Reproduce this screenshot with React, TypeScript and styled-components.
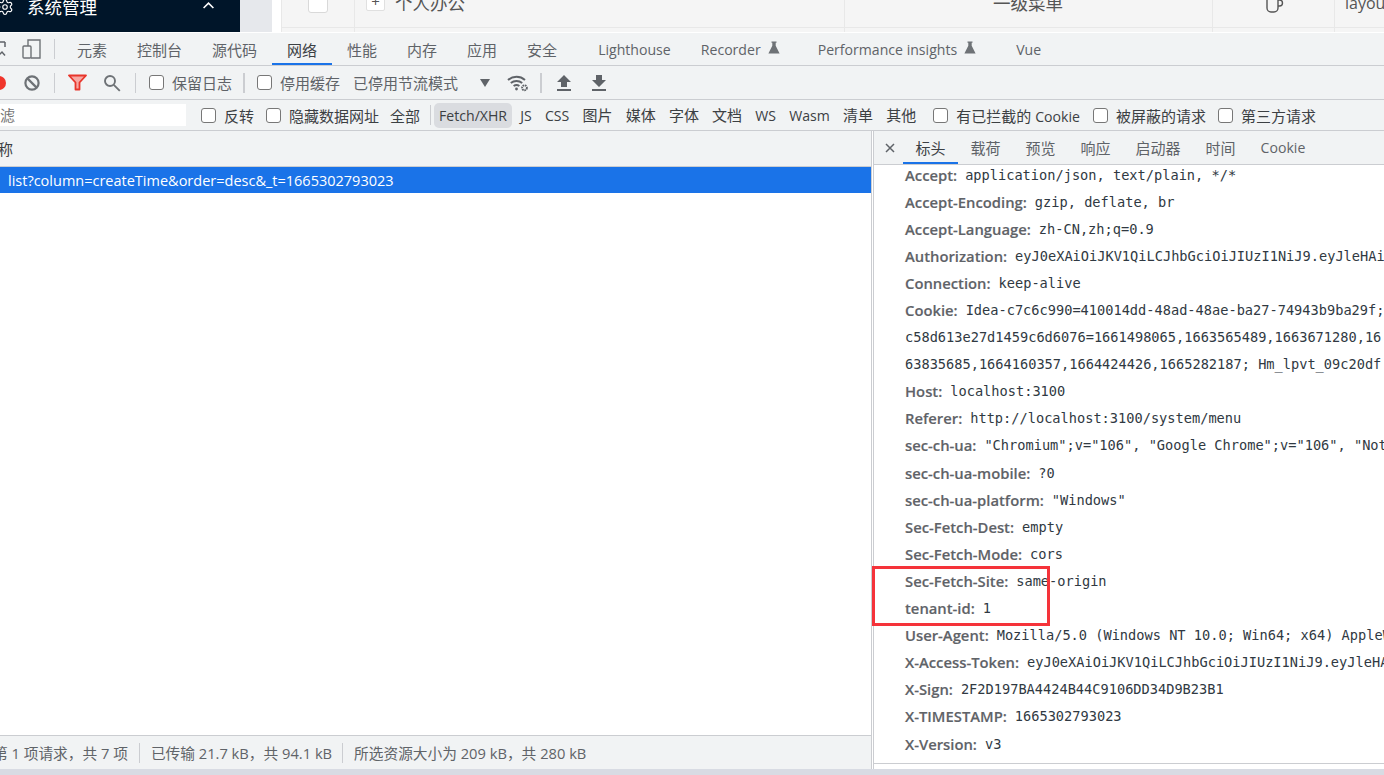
import * as React from "react";
import styled, { createGlobalStyle } from "styled-components";
import { Settings } from "lucide-react";

const UI_FONT = `"Open Sans", "Noto Sans CJK SC", sans-serif`;
const MONO_FONT = `"DejaVu Sans Mono", "Noto Sans CJK SC", monospace`;

const Global = createGlobalStyle`
  html, body {
    margin: 0;
    width: 1384px;
    height: 775px;
    overflow: hidden;
    background: #fff;
    font-family: ${UI_FONT};
  }
  #root { height: 775px; overflow: hidden; }
`;

const Page = styled.div`
  position: relative;
  display: flex;
  flex-direction: column;
  width: 1384px;
  height: 775px;
  overflow: hidden;
`;

/* app behind the devtools, only its last rows show */
const AppStrip = styled.div`
  display: flex;
  flex: 0 0 33px;
  height: 33px;
  overflow: hidden;
  background: #fff;
`;

const Sidebar = styled.div`
  display: flex;
  align-items: center;
  flex: 0 0 240px;
  height: 32px;
  box-sizing: border-box;
  padding-bottom: 18px;
  background: #001529;
  color: #fff;
  font-size: 17.5px;
  overflow: hidden;
`;

const SidebarGear = styled(Settings)`
  flex: 0 0 18px;
  margin-left: -4px;
`;

const SidebarLabel = styled.span`
  margin-left: 13px;
  line-height: 24px;
`;

const SidebarChevron = styled.svg`
  margin: -3px 0 0 106px;
`;

const Gutter = styled.div`
  flex: 0 0 32px;
  height: 32px;
  background: #e6e8ec;
`;

const TableWrap = styled.div`
  flex: 1;
  height: 32px;
  padding-left: 9px;
  overflow: hidden;
`;

const TableRow = styled.div`
  display: grid;
  grid-template-columns: 72px 490px 368px 122px 1fr;
  height: 32px;
  overflow: hidden;
  background: linear-gradient(#f5f5f5 27px, #e8e8e8 27px, #e8e8e8 28px, #f5f5f5 28px);
  border-left: 1px solid #e8e8e8;
  color: #555;
  font-size: 17.5px;
`;

const TableCell = styled.div<{ $center?: boolean }>`
  display: flex;
  align-items: flex-start;
  justify-content: ${(p) => (p.$center ? "center" : "flex-start")};
  height: 32px;
  box-shadow: 1px 0 0 #e8e8e8;
  white-space: nowrap;
`;

const RowCheck = styled.span`
  width: 20px;
  height: 20px;
  margin-top: -7px;
  box-sizing: border-box;
  background: #fff;
  border: 1px solid #d9d9d9;
  border-radius: 3px;
`;

const ExpandBox = styled.span`
  display: flex;
  align-items: center;
  justify-content: center;
  flex: 0 0 19px;
  height: 19px;
  margin: -8px 10px 0 12px;
  box-sizing: border-box;
  background: #fff;
  border: 1px solid #e0e0e0;
  border-radius: 2px;
  font-size: 15px;
  line-height: 1;
`;

const CellText = styled.span`
  margin-top: -9px;
  line-height: 24px;
`;

const LayoutText = styled(CellText)`
  margin-left: 11px;
  font-size: 16px;
`;

/* devtools */
const Tools = styled.div`
  display: flex;
  flex-direction: column;
  flex: 1;
  min-height: 0;
  background: #f1f3f4;
  color: #5f6368;
  font-size: 15px;
`;

const Latin = styled.span`
  font-size: 14.1px;
`;

const TabsBar = styled.div`
  display: flex;
  align-items: stretch;
  flex: 0 0 33px;
  box-sizing: border-box;
  border-bottom: 1px solid #cbcdd1;
`;

const DeviceGroup = styled.div`
  display: flex;
  align-items: center;
  flex: 0 0 62px;
  overflow: hidden;
`;

const DeviceSep = styled.span`
  flex: 0 0 1px;
  height: 20px;
  margin-left: 13px;
  background: #cbcdd1;
`;

const Sep = styled.span<{ $h?: number; $gap?: number; $w?: number; $right?: number }>`
  flex: 0 0 ${(p) => p.$w ?? 1}px;
  height: ${(p) => p.$h ?? 20}px;
  margin: 0 ${(p) => p.$right ?? p.$gap ?? 0}px 0 ${(p) => p.$gap ?? 0}px;
  background: #cbcdd1;
`;

const Tab = styled.div<{ $on?: boolean; $ml?: number }>`
  display: flex;
  align-items: center;
  padding: 0 15px;
  margin-left: ${(p) => p.$ml ?? 0}px;
  color: ${(p) => (p.$on ? "#3c4043" : "#5f6368")};
  white-space: nowrap;
  box-shadow: ${(p) => (p.$on ? "inset 0 -2px 0 #1a73e8" : "none")};
`;

const Flask = styled.svg`
  margin-left: 7px;
  margin-top: -3px;
`;

const ToolBar = styled.div`
  display: flex;
  align-items: center;
  flex: 0 0 34px;
  box-sizing: border-box;
  border-bottom: 1px solid #cbcdd1;
`;

const IconSlot = styled.span<{ $ml?: number }>`
  display: flex;
  margin-left: ${(p) => p.$ml ?? 0}px;
`;

const Check = styled.span<{ $ml?: number }>`
  flex: 0 0 15px;
  width: 15px;
  height: 15px;
  margin-left: ${(p) => p.$ml ?? 0}px;
  margin-right: 8px;
  box-sizing: border-box;
  background: #fff;
  border: 1.5px solid #777;
  border-radius: 3px;
`;

const BarLabel = styled.span<{ $ml?: number }>`
  margin-left: ${(p) => p.$ml ?? 0}px;
  white-space: nowrap;
`;

const FilterBar = styled.div`
  display: flex;
  align-items: center;
  flex: 0 0 31px;
  box-sizing: border-box;
  border-bottom: 1px solid #cbcdd1;
  color: #3c4043;
`;

const FilterInput = styled.div`
  flex: 0 0 186px;
  height: 22px;
  line-height: 22px;
  overflow: hidden;
  background: #fff;
  color: #757575;
  white-space: nowrap;
  text-indent: -15px;
`;

const TypeChips = styled.div`
  display: flex;
  align-items: center;
  gap: 3.2px;
  margin-left: 3px;
`;

const Chip = styled.span<{ $on?: boolean }>`
  padding: 0 5px;
  line-height: 24px;
  border-radius: 5px;
  white-space: nowrap;
  background: ${(p) => (p.$on ? "#dadce0" : "transparent")};
`;

const Split = styled.div`
  display: flex;
  flex: 1;
  min-height: 0;
  background: #fff;
`;

const ListPane = styled.div`
  display: flex;
  flex-direction: column;
  flex: 0 0 872px;
  box-sizing: border-box;
  border-right: 1px solid #cbcdd1;
`;

const ListHead = styled.div`
  display: flex;
  align-items: center;
  flex: 0 0 36px;
  box-sizing: border-box;
  border-bottom: 1px solid #cbcdd1;
  background: #f1f3f4;
  color: #3c4043;
  overflow: hidden;
  text-indent: -2px;
`;

const SelectedRow = styled.div`
  display: flex;
  align-items: center;
  flex: 0 0 26px;
  padding-left: 8px;
  background: #1a73e8;
  color: #fff;
  font-size: 14.5px;
  white-space: nowrap;
`;

const ListBody = styled.div`
  flex: 1;
`;

const StatusBar = styled.div`
  display: flex;
  align-items: center;
  flex: 0 0 34px;
  box-sizing: border-box;
  border-top: 1px solid #cbcdd1;
  background: #f1f3f4;
  color: #5f6368;
  font-size: 14.7px;
  white-space: nowrap;
  overflow: hidden;
`;

const StatusText = styled.span<{ $ml?: number }>`
  margin-left: ${(p) => p.$ml ?? 0}px;
`;

const DetailPane = styled.div`
  display: flex;
  flex-direction: column;
  flex: 1;
  min-width: 0;
  margin-left: 1px;
  border-left: 1px solid #cbcdd1;
  overflow: hidden;
`;

const DetailTabs = styled.div`
  display: flex;
  align-items: stretch;
  flex: 0 0 34px;
  box-sizing: border-box;
  border-bottom: 1px solid #cbcdd1;
  background: #f1f3f4;
`;

const CloseMark = styled.span`
  display: flex;
  align-items: center;
  margin-left: 11px;
  width: 18px;
`;

const DetailTab = styled.div<{ $on?: boolean }>`
  display: flex;
  align-items: center;
  padding: 0 12.5px;
  color: ${(p) => (p.$on ? "#3c4043" : "#5f6368")};
  box-shadow: ${(p) => (p.$on ? "inset 0 -2px 0 #1a73e8" : "none")};
`;

const Headers = styled.div`
  flex: 1;
  min-height: 0;
  padding-left: 31px;
  margin-top: -4px;
  overflow: hidden;
`;

const HeaderRow = styled.div`
  display: flex;
  align-items: center;
  height: 27.1px;
  white-space: nowrap;
`;

const HeaderName = styled.span`
  margin-right: 8px;
  color: #5f6368;
  font-size: 14.8px;
  font-weight: 600;
  -webkit-text-stroke: 0.15px #5f6368;
`;

const HeaderValue = styled.span`
  color: #303942;
  font-family: ${MONO_FONT};
  font-size: 13.65px;
`;

const DetailFoot = styled.div`
  flex: 0 0 5px;
  border-top: 1px solid #cbcdd1;
  background: #fff;
`;

const BottomBand = styled.div`
  flex: 0 0 6px;
  background: #d8dbe3;
`;

/* red box drawn over the screenshot by its author */
const Annotation = styled.div`
  position: absolute;
  left: 872px;
  top: 566px;
  width: 178px;
  height: 60px;
  box-sizing: border-box;
  border: 3px solid #f5333a;
  pointer-events: none;
`;

const HEADERS: [string, string][] = [
  ["Accept:", "application/json, text/plain, */*"],
  ["Accept-Encoding:", "gzip, deflate, br"],
  ["Accept-Language:", "zh-CN,zh;q=0.9"],
  ["Authorization:", "eyJ0eXAiOiJKV1QiLCJhbGciOiJIUzI1NiJ9.eyJleHAiOjE2NjUzMDQ1OTMsInVzZXJuYW1lIjoiYWRtaW4ifQ"],
  ["Connection:", "keep-alive"],
  ["Cookie:", "Idea-c7c6c990=410014dd-48ad-48ae-ba27-74943b9ba29f; Hm_lvt_09c20df"],
  ["", "c58d613e27d1459c6d6076=1661498065,1663565489,1663671280,16"],
  ["", "63835685,1664160357,1664424426,1665282187; Hm_lpvt_09c20df"],
  ["Host:", "localhost:3100"],
  ["Referer:", "http://localhost:3100/system/menu"],
  ["sec-ch-ua:", "\"Chromium\";v=\"106\", \"Google Chrome\";v=\"106\", \"Not;A=Brand\";v=\"99\""],
  ["sec-ch-ua-mobile:", "?0"],
  ["sec-ch-ua-platform:", "\"Windows\""],
  ["Sec-Fetch-Dest:", "empty"],
  ["Sec-Fetch-Mode:", "cors"],
  ["Sec-Fetch-Site:", "same-origin"],
  ["tenant-id:", "1"],
  ["User-Agent:", "Mozilla/5.0 (Windows NT 10.0; Win64; x64) AppleWebKit/537.36"],
  ["X-Access-Token:", "eyJ0eXAiOiJKV1QiLCJhbGciOiJIUzI1NiJ9.eyJleHAiOjE2NjUzMDQ1OTMs"],
  ["X-Sign:", "2F2D197BA4424B44C9106DD34D9B23B1"],
  ["X-TIMESTAMP:", "1665302793023"],
  ["X-Version:", "v3"],
];

const CHIPS: { label: string; latin?: boolean; on?: boolean }[] = [
  { label: "Fetch/XHR", latin: true, on: true },
  { label: "JS", latin: true },
  { label: "CSS", latin: true },
  { label: "图片" },
  { label: "媒体" },
  { label: "字体" },
  { label: "文档" },
  { label: "WS", latin: true },
  { label: "Wasm", latin: true },
  { label: "清单" },
  { label: "其他" },
];

function FlaskIcon() {
  return (
    <Flask width="12" height="13" viewBox="0 0 12 13">
      <path d="M3.5 0.5h5v1.2h-.8v3.1L11.6 12.5H.4L4.3 4.8V1.7h-.8z" fill="#6e7276" />
    </Flask>
  );
}

export default function App() {
  return (
    <Page>
      <Global />
      <AppStrip>
        <Sidebar>
          <SidebarGear size={18} strokeWidth={1.5} color="#fff" />
          <SidebarLabel>系统管理</SidebarLabel>
          <SidebarChevron width="11" height="7" viewBox="0 0 11 7" fill="none" stroke="#fff" strokeWidth="1.6">
            <path d="M.6 6L5.5 1.2 10.4 6" />
          </SidebarChevron>
        </Sidebar>
        <Gutter />
        <TableWrap>
          <TableRow>
            <TableCell $center>
              <RowCheck />
            </TableCell>
            <TableCell>
              <ExpandBox>+</ExpandBox>
              <CellText>个人办公</CellText>
            </TableCell>
            <TableCell $center>
              <CellText>一级菜单</CellText>
            </TableCell>
            <TableCell $center>
              <svg width="18" height="14" viewBox="0 0 18 14" fill="none" stroke="#555" strokeWidth="1.4" style={{ marginLeft: 4 }}>
                <path d="M1 -3V8a4 4 0 0 0 4 4h3a4 4 0 0 0 4-4V-3M12 0h1.5a3 3 0 0 1 0 6H12" />
              </svg>
            </TableCell>
            <TableCell>
              <LayoutText>layout</LayoutText>
            </TableCell>
          </TableRow>
        </TableWrap>
      </AppStrip>

      <Tools>
        <TabsBar>
          <DeviceGroup>
            <svg width="6" height="16" viewBox="0 0 6 16" fill="none" stroke="#5f6368" strokeWidth="1.5">
              <path d="M-8 1h13M-2 15l4-4 3 3.5M5 1v5" />
            </svg>
            <svg width="19" height="20" viewBox="0 0 19 20" fill="none" stroke="#6e7276" strokeWidth="1.4" style={{ marginLeft: 16 }}>
              <path d="M6 7V1h12v18H9" />
              <rect x="1" y="7" width="8" height="12" rx="1" />
            </svg>
            <DeviceSep />
          </DeviceGroup>
          <Tab>元素</Tab>
          <Tab>控制台</Tab>
          <Tab>源代码</Tab>
          <Tab $on>网络</Tab>
          <Tab>性能</Tab>
          <Tab>内存</Tab>
          <Tab>应用</Tab>
          <Tab>安全</Tab>
          <Tab $ml={11}>
            <Latin>Lighthouse</Latin>
          </Tab>
          <Tab>
            <Latin>Recorder</Latin>
            <FlaskIcon />
          </Tab>
          <Tab $ml={8}>
            <Latin>Performance insights</Latin>
            <FlaskIcon />
          </Tab>
          <Tab $ml={10}>
            <Latin>Vue</Latin>
          </Tab>
        </TabsBar>

        <ToolBar>
          <IconSlot $ml={-8}>
            <svg width="14" height="14" viewBox="0 0 14 14">
              <circle cx="7" cy="7" r="7" fill="#f0352b" />
            </svg>
          </IconSlot>
          <IconSlot $ml={18}>
            <svg width="16" height="16" viewBox="0 0 16 16" fill="none" stroke="#6e7276" strokeWidth="2.2">
              <circle cx="8" cy="8" r="6.6" />
              <path d="M3.4 3.4l9.2 9.2" />
            </svg>
          </IconSlot>
          <Sep $gap={14} $right={13} />
          <IconSlot>
            <svg width="19" height="17" viewBox="0 0 19 17">
              <path d="M1 1.5h17l-6.5 7v7h-4v-7z" fill="#f7a8a3" stroke="#e8352b" strokeWidth="1.8" strokeLinejoin="round" />
            </svg>
          </IconSlot>
          <IconSlot $ml={16}>
            <svg width="18" height="18" viewBox="0 0 18 18" fill="none" stroke="#6e7276" strokeWidth="1.9">
              <circle cx="7" cy="7" r="5" />
              <path d="M10.8 10.8l6 6" />
            </svg>
          </IconSlot>
          <Sep $gap={14} $right={13} />
          <Check />
          <BarLabel>保留日志</BarLabel>
          <Sep $gap={11} $w={2} $right={12} />
          <Check />
          <BarLabel>停用缓存</BarLabel>
          <BarLabel $ml={13}>已停用节流模式</BarLabel>
          <IconSlot $ml={22}>
            <svg width="10" height="8" viewBox="0 0 10 8">
              <path d="M0 0h10L5 8z" fill="#5f6368" />
            </svg>
          </IconSlot>
          <IconSlot $ml={17}>
            <svg width="22" height="18" viewBox="0 0 22 18" fill="none" stroke="#5f6368" strokeWidth="2">
              <path d="M1 6a13 13 0 0 1 17 0M3.8 9a9 9 0 0 1 11.4 0M6.6 12a5 5 0 0 1 5.8 0" />
              <circle cx="9.5" cy="15" r="1.4" fill="#5f6368" stroke="none" />
              <circle cx="17.5" cy="13.8" r="2.4" strokeWidth="1.9" strokeDasharray="1.5 0.6" />
            </svg>
          </IconSlot>
          <Sep $gap={11} $w={2} $right={15} />
          <IconSlot>
            <svg width="14" height="16" viewBox="0 0 14 16" fill="#5f6368">
              <path d="M7 0L14 7H10v5H4V7H0zM0 14h14v2H0z" />
            </svg>
          </IconSlot>
          <IconSlot $ml={21}>
            <svg width="14" height="16" viewBox="0 0 14 16" fill="#5f6368">
              <path d="M4 0h6v5h4l-7 7-7-7h4zM0 14h14v2H0z" />
            </svg>
          </IconSlot>
        </ToolBar>

        <FilterBar>
          <FilterInput>过滤</FilterInput>
          <Check $ml={15} />
          <BarLabel>反转</BarLabel>
          <Check $ml={12} />
          <BarLabel>隐藏数据网址</BarLabel>
          <BarLabel $ml={11}>全部</BarLabel>
          <Sep $gap={10} $right={0} />
          <TypeChips>
            {CHIPS.map(({ label, latin, on }) => (
              <Chip key={label} $on={on}>
                {latin ? <Latin>{label}</Latin> : label}
              </Chip>
            ))}
          </TypeChips>
          <Check $ml={12} />
          <BarLabel>
            有已拦截的 <Latin>Cookie</Latin>
          </BarLabel>
          <Check $ml={13} />
          <BarLabel>被屏蔽的请求</BarLabel>
          <Check $ml={12} />
          <BarLabel>第三方请求</BarLabel>
        </FilterBar>

        <Split>
          <ListPane>
            <ListHead>称</ListHead>
            <SelectedRow>list?column=createTime&amp;order=desc&amp;_t=1665302793023</SelectedRow>
            <ListBody />
            <StatusBar>
              <StatusText $ml={-7}>第 1 项请求，共 7 项</StatusText>
              <Sep $gap={11} />
              <StatusText>已传输 21.7 kB，共 94.1 kB</StatusText>
              <Sep $gap={10} $right={11} />
              <StatusText>所选资源大小为 209 kB，共 280 kB</StatusText>
            </StatusBar>
          </ListPane>
          <DetailPane>
            <DetailTabs>
              <CloseMark>
                <svg width="10" height="10" viewBox="0 0 10 10" stroke="#5f6368" strokeWidth="1.5">
                  <path d="M1 1l8 8M9 1l-8 8" />
                </svg>
              </CloseMark>
              <DetailTab $on>标头</DetailTab>
              <DetailTab>载荷</DetailTab>
              <DetailTab>预览</DetailTab>
              <DetailTab>响应</DetailTab>
              <DetailTab>启动器</DetailTab>
              <DetailTab>时间</DetailTab>
              <DetailTab>
                <Latin>Cookie</Latin>
              </DetailTab>
            </DetailTabs>
            <Headers>
              {HEADERS.map(([name, value]) => (
                <HeaderRow key={name + value}>
                  {name && <HeaderName>{name}</HeaderName>}
                  <HeaderValue>{value}</HeaderValue>
                </HeaderRow>
              ))}
            </Headers>
            <DetailFoot />
          </DetailPane>
        </Split>
        <BottomBand />
      </Tools>
      <Annotation />
    </Page>
  );
}
